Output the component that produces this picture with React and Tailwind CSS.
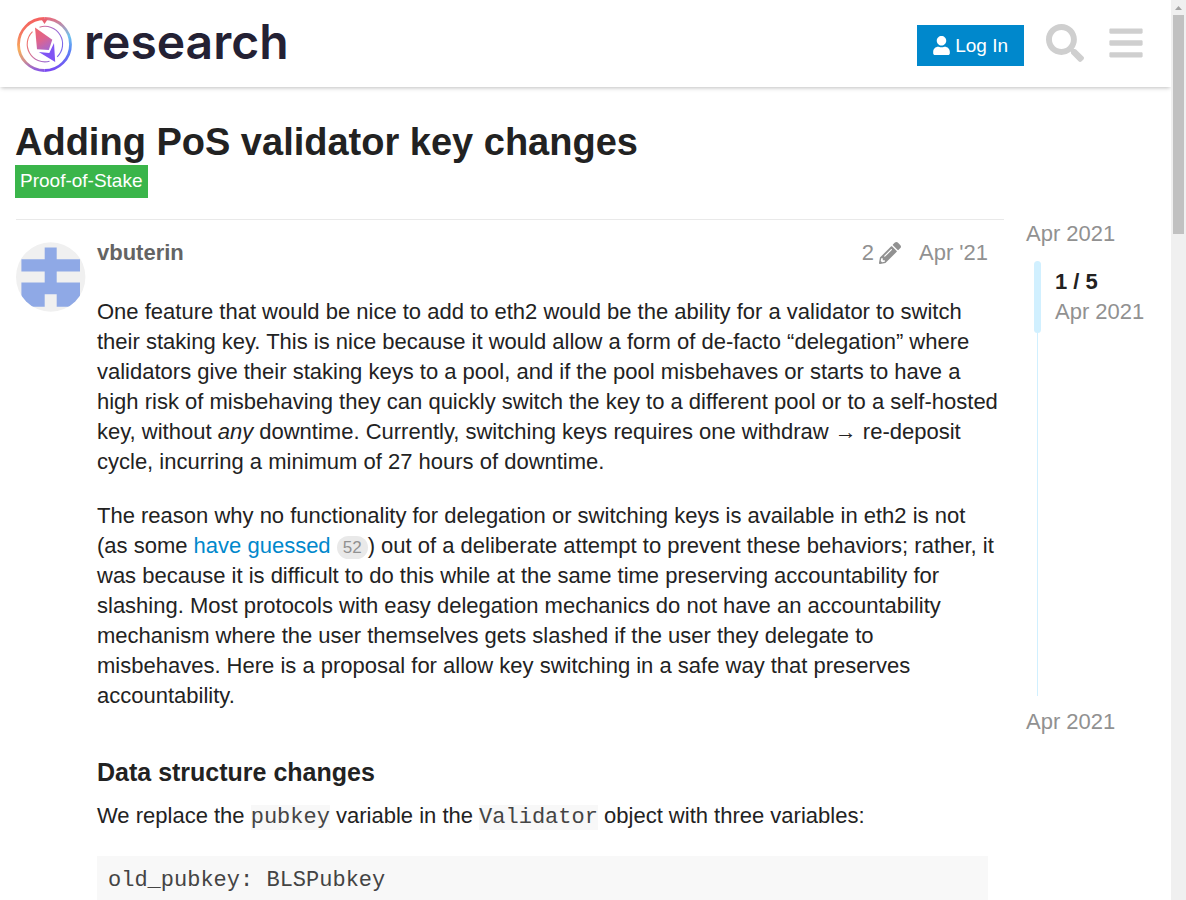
import React from "react";
import { FaUser, FaSearch, FaBars, FaPencilAlt } from "react-icons/fa";

function Logo() {
  return (
    <a href="#home" className="flex items-center gap-3 pt-[2px] text-[#242134]" aria-label="research">
      <svg className="size-[55px] shrink-0" viewBox="0 0 55 55" fill="none" aria-hidden="true">
        <defs>
          <linearGradient id="warm" x1="0" y1="0" x2="0" y2="55" gradientUnits="userSpaceOnUse">
            <stop offset="0.05" stopColor="#f5635f" />
            <stop offset="0.28" stopColor="#f47560" />
            <stop offset="0.6" stopColor="#f8ae5c" />
            <stop offset="0.8" stopColor="#d08f8f" />
            <stop offset="1" stopColor="#7d4ff0" />
          </linearGradient>
          <linearGradient id="cool" x1="0" y1="0" x2="0" y2="55" gradientUnits="userSpaceOnUse">
            <stop offset="0" stopColor="#ee6474" />
            <stop offset="0.14" stopColor="#b98fae" />
            <stop offset="0.35" stopColor="#6fc3ee" />
            <stop offset="0.6" stopColor="#5a86f5" />
            <stop offset="1" stopColor="#7a45f2" />
          </linearGradient>
          <linearGradient id="gem" x1="20" y1="12" x2="34" y2="34" gradientUnits="userSpaceOnUse">
            <stop offset="0" stopColor="#ee6470" />
            <stop offset="0.45" stopColor="#dc6490" />
            <stop offset="1" stopColor="#9c68da" />
          </linearGradient>
          <linearGradient id="ring" x1="10" y1="22" x2="46" y2="34" gradientUnits="userSpaceOnUse">
            <stop offset="0" stopColor="#f2766a" />
            <stop offset="0.5" stopColor="#b36cc0" />
            <stop offset="1" stopColor="#7468f0" />
          </linearGradient>
        </defs>
        <path d="M27.5 1.5a26 26 0 0 0 0 52" stroke="url(#warm)" strokeWidth="2.8" />
        <path d="M27.5 1.5a26 26 0 0 1 0 52" stroke="url(#cool)" strokeWidth="2.8" />
        <path d="M24 1.5h7l-1.5 2.5-2 3-2-3z" fill="#e9606f" />
        <path d="M22.5 10.2a17.7 17.7 0 0 1 17.7 29.6M15.5 14.6a17.7 17.7 0 0 0 17 29.7" stroke="url(#ring)" strokeWidth="1.1" />
        <path d="M18 10.5 35.3 22.8 31.8 33 20 32.2z" fill="url(#gem)" />
        <path d="M37 26 38.2 45 21.8 35 32.3 36z" fill="#8054f4" />
      </svg>
      <span className="pb-[5px] font-['Inter',sans-serif] text-[48px] leading-[50px] font-semibold">research</span>
    </a>
  );
}

function Header() {
  return (
    <header className="relative flex h-[87px] shrink-0 items-center justify-between bg-white pr-[26px] pb-px pl-[17px] shadow-[0_2px_4px_-1px_rgba(0,0,0,0.25)]">
      <Logo />
      <div className="flex items-center">
        <button type="button" className="mt-[5px] flex h-[41px] items-center gap-1 bg-[#0088cc] pr-4 pl-[15px] text-[19px] text-white">
          <FaUser className="size-[19px]" />
          Log In
        </button>
        <button type="button" aria-label="Search" className="ml-[22px] text-[#cfcfcf]">
          <FaSearch className="size-[38px]" />
        </button>
        <button type="button" aria-label="Menu" className="ml-[23px] text-[#cfcfcf]">
          <FaBars className="size-[38px]" />
        </button>
      </div>
    </header>
  );
}

function Avatar() {
  return (
    <svg className="mt-[22px] size-[70px] shrink-0" viewBox="0 0 70 70" role="img" aria-label="vbuterin">
      <defs>
        <clipPath id="disc">
          <circle cx="34.7" cy="35" r="34.7" />
        </clipPath>
      </defs>
      <g clipPath="url(#disc)">
        <rect width="70" height="70" fill="#f0f0f0" />
        <path fill="#8fa9e6" d="M28.7 5.5h12v11.7H64v12.3H40.7v11H64v24.2H40.7V52.2h-12v12.5H5.4V40.5h23.3v-11H5.4V17.2h23.3z" />
      </g>
    </svg>
  );
}

function Code({ children }) {
  return <code className="bg-[#f8f8f8] font-['Liberation_Mono',monospace] text-[#444]">{children}</code>;
}

function Post() {
  return (
    <article className="flex min-w-0 flex-1 gap-[11px] border-t border-[#e9e9e9]">
      <Avatar />
      <div className="min-w-0 flex-1 pt-[18px]">
        <div className="flex items-center pr-4 leading-[30px] text-[#919191]">
          <a href="#vbuterin" className="flex-1 font-bold text-[#646464]">vbuterin</a>
          <button type="button" className="mr-[18px] flex items-center gap-[5px]" aria-label="2 edits">
            2
            <FaPencilAlt className="size-[22px]" />
          </button>
          <a href="#post-1">Apr '21</a>
        </div>
        <div className="pt-[29px] pr-[5px]">
          <p className="mb-6">
            One feature that would be nice to add to eth2 would be the ability for a validator to switch their staking
            key. This is nice because it would allow a form of de-facto “delegation” where validators give their staking
            keys to a pool, and if the pool misbehaves or starts to have a high risk of misbehaving they can quickly
            switch the key to a different pool or to a self-hosted key, without <em>any</em> downtime. Currently,
            switching keys requires one withdraw → re-deposit cycle, incurring a minimum of 27 hours of downtime.
          </p>
          <p className="mb-[45px]">
            The reason why no functionality for delegation or switching keys is available in eth2 is not (as some{" "}
            <a href="#guessed" className="text-[#0088cc]">have guessed</a>{" "}
            <span className="inline-block rounded-full bg-[#e9e9e9] px-[6px] align-middle text-[17px] leading-[23px] text-[#919191]">52</span>
            ) out of a deliberate attempt to prevent these behaviors; rather, it was because it is difficult to do this
            while at the same time preserving accountability for slashing. Most protocols with easy delegation mechanics
            do not have an accountability mechanism where the user themselves gets slashed if the user they delegate to
            misbehaves. Here is a proposal for allow key switching in a safe way that preserves accountability.
          </p>
          <h3 className="mb-[13px] text-[25px] leading-[32px] font-bold">Data structure changes</h3>
          <p className="mb-[23px]">
            We replace the <Code>pubkey</Code> variable in the <Code>Validator</Code> object with three variables:
          </p>
          <pre className="mr-[11px] bg-[#f8f8f8] px-[11px] py-[10px] font-['Liberation_Mono',monospace] text-[#444]">
            <code>{"old_pubkey: BLSPubkey"}</code>
          </pre>
        </div>
      </div>
    </article>
  );
}

function Timeline() {
  return (
    <aside className="w-[145px] shrink-0 text-[#919191]">
      <a href="#first" className="block">Apr 2021</a>
      <div className="mt-3 mb-2 flex h-[435px]">
        <div className="ml-2 flex w-[7px] flex-col items-center">
          <div className="h-[72px] w-full rounded-full bg-[#d1f0ff]" />
          <div className="w-px flex-1 bg-[#d1f0ff]" />
        </div>
        <div className="ml-[14px] pt-[6px]">
          <div className="font-bold text-[#222]">1 / 5</div>
          <div>Apr 2021</div>
        </div>
      </div>
      <a href="#last" className="block pt-[3px]">Apr 2021</a>
    </aside>
  );
}

function Scrollbar() {
  return (
    <div className="flex w-[15px] shrink-0 flex-col items-center bg-[#f0f0f0]" aria-hidden="true">
      <div className="flex h-[15px] items-center">
        <svg className="h-1 w-[7px]" viewBox="0 0 7 4">
          <path d="M3.5 0 7 4H0z" fill="#a3a3a3" />
        </svg>
      </div>
      <div className="h-[219px] w-[11px] bg-[#c1c1c1]" />
    </div>
  );
}

export default function App() {
  return (
    <div className="flex h-screen overflow-hidden bg-white font-['Liberation_Sans',Arial,sans-serif] text-[22px] leading-[30px] text-[#222]">
      <div className="flex min-w-0 flex-1 flex-col overflow-hidden">
        <Header />
        <main className="flex-1 pt-8 pl-[15px]">
          <h1 className="text-[38px] leading-[46px] font-bold">Adding PoS validator key changes</h1>
          <a href="#proof-of-stake" className="inline-block bg-[#3ab54a] px-[5px] pb-px text-[19px] leading-[32px] text-white">
            Proof-of-Stake
          </a>
          <div className="mt-[21px] flex gap-[22px] pl-px">
            <Post />
            <Timeline />
          </div>
        </main>
      </div>
      <Scrollbar />
    </div>
  );
}
